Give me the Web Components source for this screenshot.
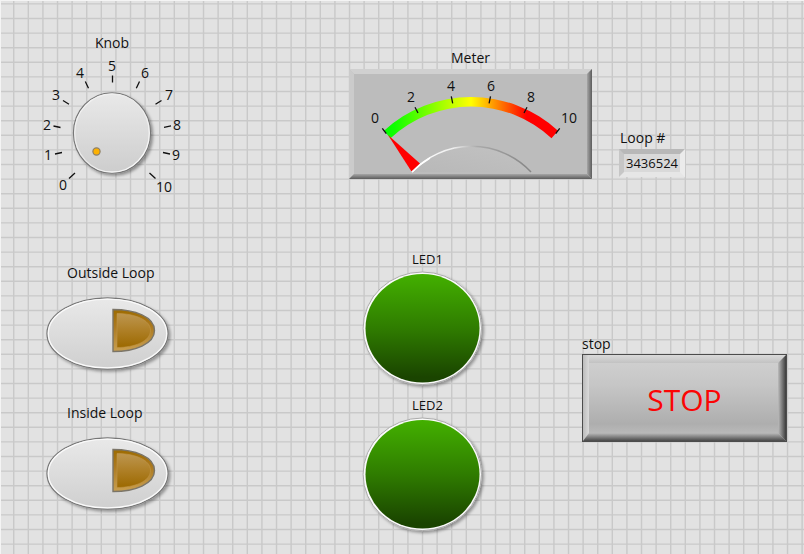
<!DOCTYPE html>
<html lang="en">
<head>
<meta charset="utf-8">
<title>Front Panel</title>
<style>
html, body { margin: 0; min-height: 100%; }
body { background: #e2e2e2; color: #111; font: 14px/20px "Open Sans", "Noto Sans", sans-serif; }
</style>
</head>
<body>
<front-panel></front-panel>
<script>
const define = (name, html, setup) => {
  const tpl = document.createElement('template');
  tpl.innerHTML = html;
  customElements.define(name, class extends HTMLElement {
    connectedCallback() {
      if (this.shadowRoot) return;
      this.attachShadow({ mode: 'open' }).append(tpl.content.cloneNode(true));
      if (setup) setup(this, this.shadowRoot);
    }
  });
};

/* Alignment grid behind the controls, redrawn for the window size. */
define('panel-grid', `
<style>
:host { position: absolute; inset: 0; overflow: hidden; z-index: -1; }
svg { display: block; width: 100%; height: 100%; }
</style>
<svg aria-hidden="true"><path fill="none" stroke="#c9c9c9" stroke-width="1.4"/><path fill="none" stroke="#f4f4f4" stroke-width="1"/></svg>`,
(host, root) => {
  const [grid, edge] = root.querySelectorAll('path');
  const draw = () => {
    const w = host.clientWidth, h = host.clientHeight, step = 14.6;
    let d = '';
    for (let x = 13.7; x < w; x += step) d += `M${x.toFixed(1)} 0V${h}`;
    for (let y = 3.9; y < h; y += step) d += `M0 ${y.toFixed(1)}H${w}`;
    grid.setAttribute('d', d);
    edge.setAttribute('d', `M.5 0V${h}M0 .5H${w}`);
  };
  new ResizeObserver(draw).observe(host);
  draw();
});

define('panel-knob', `
<style>
:host { display: block; width: 150px; }
label { display: block; text-align: center; }
.dial { display: grid; }
.dial > * { grid-area: 1 / 1; }
svg { display: block; width: 100%; overflow: visible; }
input { width: 76px; height: 80px; margin: 0; opacity: 0; place-self: center; }
text { font-size: 14px; text-anchor: middle; fill: #111; }
</style>
<label for="knob"><slot></slot></label>
<div class="dial">
<svg viewBox="37 53 150 144" aria-hidden="true">
<defs>
<linearGradient id="face" x1="0" y1="0" x2="0" y2="1"><stop offset="0" stop-color="#e9e9e9"/><stop offset="1" stop-color="#cdcdcd"/></linearGradient>
<linearGradient id="rim" x1="0" y1="0" x2="1" y2="1"><stop offset="0" stop-color="#f5f5f5"/><stop offset=".5" stop-color="#e8e8e8"/><stop offset="1" stop-color="#fff"/></linearGradient>
<filter id="shade" x="-20%" y="-20%" width="140%" height="140%"><feDropShadow dx="2" dy="2" stdDeviation="1.8" flood-color="#000" flood-opacity=".38"/></filter>
</defs>
<ellipse cx="112" cy="133" rx="38.5" ry="40.2" fill="url(#face)" stroke="#777" stroke-width="1.3" filter="url(#shade)"/>
<ellipse cx="112" cy="133" rx="37.3" ry="39" fill="none" stroke="url(#rim)" stroke-width="1.3"/>
<circle cx="96.5" cy="151.5" r="3.6" fill="#fdb100" stroke="#8d7f66" stroke-width="1.2"/>
<path stroke="#111" stroke-width="1.3" d="M69 178.5l6-5.5M55 154l7-1.5M53.5 126l7 1.5M63 100.500l6 3.700M85.300 81.500l3.200 6.700M112.500 75.500v7M139.500 81.500l-3.200 6.700M161.500 100.500l-6 3.800M171 125.800l-7 1.500M170 154l-7-1.500M149.500 173l6 5.500"/>
<text x="63" y="190">0</text><text x="48" y="160">1</text><text x="47" y="130">2</text><text x="56" y="100">3</text><text x="80" y="78">4</text><text x="112" y="71">5</text><text x="145" y="78">6</text><text x="169" y="100">7</text><text x="177" y="130">8</text><text x="176" y="160">9</text><text x="164" y="192">10</text>
</svg>
<input id="knob" type="range" min="0" max="10" step="any" value="0">
</div>`);

define('panel-meter', `
<style>
:host { display: block; width: 243px; }
.name { display: block; text-align: center; margin-bottom: 1px; }
svg { display: block; width: 100%; }
text { font-size: 14px; text-anchor: middle; fill: #111; }
</style>
<span class="name" id="name"><slot></slot></span>
<svg viewBox="349 69 243 110" role="meter" aria-labelledby="name" aria-valuemin="0" aria-valuemax="10" aria-valuenow="0">
<defs>
<linearGradient id="scale" gradientUnits="userSpaceOnUse" x1="384" x2="558" y1="0" y2="0"><stop offset="0" stop-color="#0f0"/><stop offset=".06" stop-color="#10ff00"/><stop offset=".5" stop-color="#ff0"/><stop offset=".82" stop-color="#f00"/><stop offset="1" stop-color="#f00"/></linearGradient>
<linearGradient id="hub" gradientUnits="userSpaceOnUse" x1="412" x2="531" y1="0" y2="0"><stop offset="0" stop-color="#fff"/><stop offset=".35" stop-color="#eee"/><stop offset=".55" stop-color="#aaa"/><stop offset="1" stop-color="#858585"/></linearGradient>
<linearGradient id="right" x1="0" x2="1" y1="0" y2="0"><stop offset="0" stop-color="#a6a6a6"/><stop offset="1" stop-color="#5c5c5c"/></linearGradient>
<linearGradient id="bottom" x1="0" x2="0" y1="0" y2="1"><stop offset="0" stop-color="#a6a6a6"/><stop offset="1" stop-color="#5c5c5c"/></linearGradient>
<linearGradient id="body" x1="0" x2="1" y1="1" y2="0"><stop offset="0" stop-color="#b8b8b8"/><stop offset="1" stop-color="#c2c2c2"/></linearGradient>
</defs>
<rect x="349" y="69" width="243" height="110" fill="#bcbcbc"/>
<path d="M349 69h243l-5 5H354z" fill="#d0d0d0"/>
<path d="M349 69l5 5v100l-5 5z" fill="#cbcbcb"/>
<path d="M592 69v110l-5-5V74z" fill="url(#right)"/>
<path d="M349 179l5-5h233l5 5z" fill="url(#bottom)"/>
<path d="M384 130.7A129 129 0 0 1 558 130.7L551.5 138.3A118 118 0 0 0 390.5 138.3z" fill="url(#scale)"/>
<path d="M412 172A81.7 81.7 0 0 1 531 172z" fill="url(#body)"/>
<path d="M412 172A81.7 81.7 0 0 1 531 172" fill="none" stroke="url(#hub)" stroke-width="1.5"/>
<path d="M388 135L411.5 171.5L420 163.5z" fill="#f00"/>
<path d="M412 172A81.7 81.7 0 0 1 430 158" fill="none" stroke="#fff" stroke-width="1.5"/>
<path stroke="#111" stroke-width="1.3" d="M382.3 128.3l4 5.4M415 107.3l3 5.7M451.3 96.3l1.4 7M490.5 96.3l-1.4 7M527 107.3l-3 5.7M559.7 128.3l-4 5.4"/>
<text x="375" y="123">0</text><text x="411" y="102">2</text><text x="451" y="91">4</text><text x="491" y="91">6</text><text x="531" y="102">8</text><text x="569" y="123">10</text>
</svg>`);

define('panel-counter', `
<style>
:host { display: block; width: max-content; }
label { display: block; padding-left: 1px; margin-bottom: 1px; }
output { display: block; font-size: 13px; line-height: 18px; padding: 0 2px; background: #d9d9d9; border: 5px solid; border-color: #b8b8b8 #ebebeb #e6e6e6 #c6c6c6; }
</style>
<label for="count"><slot></slot></label>
<output id="count"></output>`,
(host, root) => { root.querySelector('output').textContent = host.getAttribute('value'); });

define('panel-toggle', `
<style>
:host { display: block; width: 140px; }
label { display: block; padding-left: 30px; margin-bottom: 7px; white-space: nowrap; }
button { display: block; width: 100%; padding: 0; border: 0; background: none; }
svg { display: block; width: 100%; overflow: visible; }
</style>
<label for="switch"><slot></slot></label>
<button id="switch" type="button" aria-pressed="false">
<svg viewBox="37 290 140 90" aria-hidden="true">
<defs>
<linearGradient id="face" x1="0" y1="0" x2="0" y2="1"><stop offset="0" stop-color="#e9e9e9"/><stop offset="1" stop-color="#cfcfcf"/></linearGradient>
<linearGradient id="lamp" x1="0" y1="0" x2="0" y2="1"><stop offset="0" stop-color="#bd9650"/><stop offset=".5" stop-color="#ae7f26"/><stop offset="1" stop-color="#9c6900"/></linearGradient>
<linearGradient id="frame" x1="0" y1="0" x2="0" y2="1"><stop offset="0" stop-color="#9d6b00"/><stop offset=".4" stop-color="#ab7920"/><stop offset="1" stop-color="#c99f50"/></linearGradient>
<filter id="shade" x="-20%" y="-20%" width="140%" height="140%"><feDropShadow dx="2" dy="2" stdDeviation="1.6" flood-color="#000" flood-opacity=".35"/></filter>
</defs>
<ellipse cx="107.5" cy="333.5" rx="60.5" ry="35.7" fill="url(#face)" stroke="#777" stroke-width="1.3" filter="url(#shade)"/>
<ellipse cx="107.5" cy="333.5" rx="59.2" ry="34.4" fill="none" stroke="#fafafa" stroke-width="1.3"/>
<path d="M113 309.5C135 309.5 154.5 317 154.5 330.5S135 351.5 113 351.5z" fill="url(#frame)" stroke="#7b7568" stroke-width="1.4"/>
<path d="M117 313.5C134 313.5 150.5 319.5 150.5 330.5S134 347.5 117 347.5z" fill="url(#lamp)" stroke="#c39848" stroke-opacity=".55"/>
</svg></button>`);

define('panel-led', `
<style>
:host { display: block; width: 130px; }
.name { display: block; padding-left: 55px; font-size: 13px; }
svg { display: block; width: 100%; overflow: visible; }
</style>
<span class="name" id="name"><slot></slot></span>
<svg viewBox="357 269 130 121" role="img" aria-labelledby="name">
<defs>
<linearGradient id="glow" x1="0" y1="0" x2="0" y2="1"><stop offset="0" stop-color="#43b000"/><stop offset=".5" stop-color="#2f7c00"/><stop offset=".95" stop-color="#1a4400"/><stop offset="1" stop-color="#1a4400"/></linearGradient>
<filter id="shade" x="-20%" y="-20%" width="140%" height="140%"><feDropShadow dx="2" dy="2" stdDeviation="1.8" flood-color="#000" flood-opacity=".35"/></filter>
</defs>
<ellipse cx="422.3" cy="328.3" rx="59.2" ry="56.3" fill="#fafafa" stroke="#aaa" filter="url(#shade)"/>
<ellipse cx="422.5" cy="328.3" rx="57" ry="54.3" fill="url(#glow)"/>
</svg>`);

define('panel-stop', `
<style>
:host { display: block; width: 205px; max-width: 100%; }
label { display: block; }
button { position: relative; display: block; width: 100%; padding: 25px 8px 21px; border: 1px solid #4c4c4c; border-radius: 0; text-align: center;
  font: 30px/40px "Open Sans", "Noto Sans", sans-serif; color: #fb0505;
  background: linear-gradient(90deg, #bcbcbc, #dadada) left / 6px 100% no-repeat,
    linear-gradient(#dadada, #c2c2c2) top / 100% 8px no-repeat,
    linear-gradient(#cfcfcf 8%, #c6c6c6 35%, #aeaeae 80%, #bababa 92%); }
button::before, button::after { content: ""; position: absolute; right: 0; bottom: 0; }
button::before { top: 0; width: 8px; background: linear-gradient(90deg, #bbb, #3c3c3c); clip-path: polygon(100% 0, 100% 100%, 0 calc(100% - 8px), 0 8px); }
button::after { left: 0; height: 8px; background: linear-gradient(#bababa, #484848); clip-path: polygon(0 100%, 6px 0, calc(100% - 8px) 0, 100% 100%); }
</style>
<label for="halt"><slot></slot></label>
<button id="halt" type="button">STOP</button>`);

define('front-panel', `
<style>
:host { position: relative; z-index: 0; display: flex; flex-direction: column; gap: 52px; min-height: 100vh; padding: 33px 0 16px 37px; box-sizing: border-box; }
.row { display: grid; align-items: start; }
.dials { grid-template-columns: 312fr 270fr 185fr; }
.lights { grid-template-columns: 320fr 225fr 222fr; }
.stack { display: grid; }
.switches { gap: 23px; padding-top: 14px; }
.leds { gap: 5px; }
panel-meter { padding-top: 15px; }
panel-counter { padding-top: 95px; }
panel-stop { padding-top: 85px; }
</style>
<panel-grid></panel-grid>
<section class="row dials">
<panel-knob>Knob</panel-knob>
<panel-meter>Meter</panel-meter>
<panel-counter value="3436524">Loop #</panel-counter>
</section>
<section class="row lights">
<div class="stack switches"><panel-toggle>Outside Loop</panel-toggle><panel-toggle>Inside Loop</panel-toggle></div>
<div class="stack leds"><panel-led>LED1</panel-led><panel-led>LED2</panel-led></div>
<panel-stop>stop</panel-stop>
</section>`);
</script>
</body>
</html>
